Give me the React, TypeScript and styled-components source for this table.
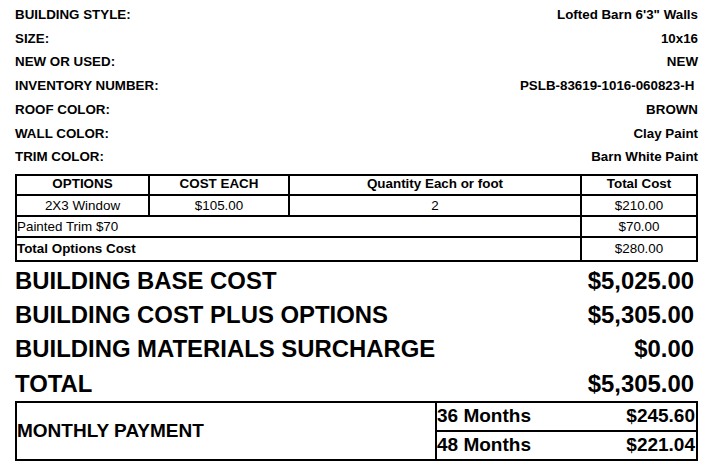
import React from 'react';
import styled, { createGlobalStyle } from 'styled-components';

const GlobalStyle = createGlobalStyle`
  html, body {
    margin: 0;
    padding: 0;
    background: #ffffff;
  }
  body {
    font-family: "Liberation Sans", Arial, sans-serif;
    color: #000000;
  }
  * {
    box-sizing: border-box;
  }
`;

const Page = styled.div`
  width: 716px;
  padding: 3px 18px 0 15px;
`;

const InfoList = styled.div`
  display: flex;
  flex-direction: column;
`;

const InfoRow = styled.div`
  display: flex;
  justify-content: space-between;
  font-size: 13.35px;
  font-weight: 700;
  line-height: 23.7px;
`;

const OptionsTable = styled.table`
  width: 683px;
  margin-top: 5px;
  table-layout: fixed;
  border-collapse: separate;
  border-spacing: 0;
  border-top: 2px solid #000;
  border-left: 2px solid #000;
  font-size: 13.4px;
`;

const Cell = styled.td<{ $height: number; $bold?: boolean; $left?: boolean; $lift?: number }>`
  height: ${p => p.$height + 2}px;
  padding: 0 0 ${p => p.$lift || 0}px 0;
  border-right: 2px solid #000;
  border-bottom: 2px solid #000;
  text-align: ${p => (p.$left ? 'left' : 'center')};
  font-weight: ${p => (p.$bold ? 700 : 400)};
  vertical-align: middle;
  white-space: nowrap;
  overflow: hidden;
  line-height: normal;
`;

const Summary = styled.div`
  margin-top: 2px;
  display: flex;
  flex-direction: column;
`;

const SummaryRow = styled.div`
  display: flex;
  justify-content: space-between;
  font-size: 23.9px;
  font-weight: 700;
  line-height: 34.2px;
  padding-right: 4px;
`;

const PaymentBox = styled.div`
  display: grid;
  grid-template-columns: 418px 1fr;
  border: 2px solid #000;
  height: 60px;
  font-weight: 700;
  font-size: 19px;
`;

const PaymentLabel = styled.div`
  display: flex;
  align-items: center;
`;

const PlanList = styled.div`
  display: grid;
  grid-template-rows: 29px 1fr;
  border-left: 2px solid #000;
`;

const PlanRow = styled.div<{ $divider?: boolean }>`
  display: flex;
  justify-content: space-between;
  align-items: center;
  border-bottom: ${p => (p.$divider ? '2px solid #000' : 'none')};
  padding-right: 1px;
`;

const info = [
  ['BUILDING STYLE:', 'Lofted Barn 6\'3" Walls'],
  ['SIZE:', '10x16'],
  ['NEW OR USED:', 'NEW'],
  ['INVENTORY NUMBER:', 'PSLB-83619-1016-060823-H\u00a0'],
  ['ROOF COLOR:', 'BROWN'],
  ['WALL COLOR:', 'Clay Paint'],
  ['TRIM COLOR:', 'Barn White Paint'],
];

const summary = [
  ['BUILDING BASE COST', '$5,025.00'],
  ['BUILDING COST PLUS OPTIONS', '$5,305.00'],
  ['BUILDING MATERIALS SURCHARGE', '$0.00'],
  ['TOTAL', '$5,305.00'],
];

const plans = [
  ['36 Months', '$245.60'],
  ['48 Months', '$221.04'],
];

export default function App() {
  return (
    <Page>
      <GlobalStyle />
      <InfoList>
        {info.map(([label, value]) => (
          <InfoRow key={label}>
            <span>{label}</span>
            <span>{value}</span>
          </InfoRow>
        ))}
      </InfoList>

      <OptionsTable>
        <colgroup>
          <col style={{ width: 133 }} />
          <col style={{ width: 140 }} />
          <col style={{ width: 292 }} />
          <col style={{ width: 116 }} />
        </colgroup>
        <tbody>
          <tr>
            <Cell as="th" $height={18} $bold $lift={3}>OPTIONS</Cell>
            <Cell as="th" $height={18} $bold $lift={3}>COST EACH</Cell>
            <Cell as="th" $height={18} $bold $lift={3}>Quantity Each or foot</Cell>
            <Cell as="th" $height={18} $bold $lift={3}>Total Cost</Cell>
          </tr>
          <tr>
            <Cell $height={19}>2X3 Window</Cell>
            <Cell $height={19}>$105.00</Cell>
            <Cell $height={19}>2</Cell>
            <Cell $height={19}>$210.00</Cell>
          </tr>
          <tr>
            <Cell $height={19} $left colSpan={3}>Painted Trim $70</Cell>
            <Cell $height={19}>$70.00</Cell>
          </tr>
          <tr>
            <Cell $height={22} $left $bold colSpan={3}>Total Options Cost</Cell>
            <Cell $height={22}>$280.00</Cell>
          </tr>
        </tbody>
      </OptionsTable>

      <Summary>
        {summary.map(([label, value]) => (
          <SummaryRow key={label}>
            <span>{label}</span>
            <span>{value}</span>
          </SummaryRow>
        ))}
      </Summary>

      <PaymentBox>
        <PaymentLabel>MONTHLY PAYMENT</PaymentLabel>
        <PlanList>
          {plans.map(([term, amount], i) => (
            <PlanRow key={term} $divider={i === 0}>
              <span>{term}</span>
              <span>{amount}</span>
            </PlanRow>
          ))}
        </PlanList>
      </PaymentBox>
    </Page>
  );
}
